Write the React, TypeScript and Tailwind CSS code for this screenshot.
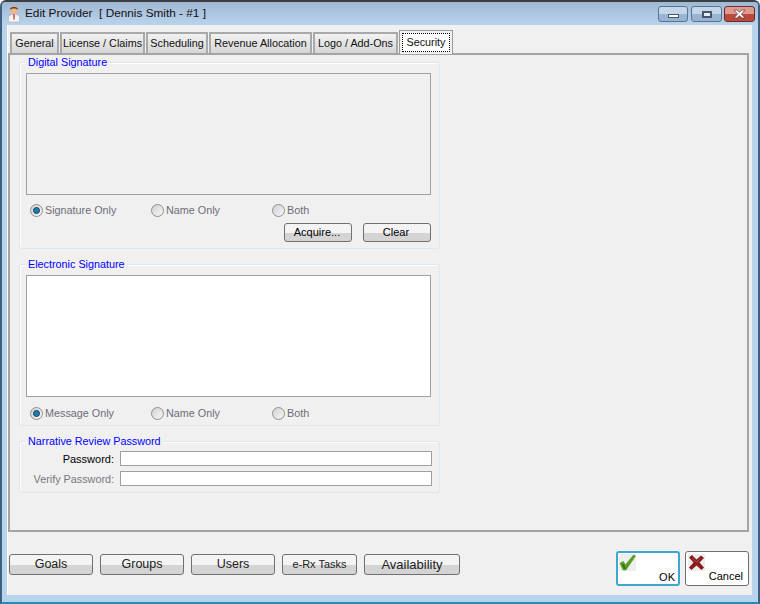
import React from 'react';

const font = "font-['Liberation_Sans',Arial,sans-serif]";

const tabs = [
  { label: 'General', width: 'w-[49px]' },
  { label: 'License / Claims', width: 'w-[85px]' },
  { label: 'Scheduling', width: 'w-[62px]' },
  { label: 'Revenue Allocation', width: 'w-[103px]' },
  { label: 'Logo / Add-Ons', width: 'w-[85px]' },
];

const footerButtons = [
  { label: 'Goals', width: 'w-[84px]', text: 'text-[12.5px]' },
  { label: 'Groups', width: 'w-[84px]', text: 'text-[12.5px]' },
  { label: 'Users', width: 'w-[84px]', text: 'text-[12.5px]' },
  { label: 'e-Rx Tasks', width: 'w-[75px]', text: 'text-[11px]' },
  { label: 'Availability', width: 'w-[96px]', text: 'text-[13px]' },
];

const Radio: React.FC<{ label: string; checked?: boolean; width: string }> = ({ label, checked, width }) => (
  <div className={`flex items-center gap-[2px] ${width}`}>
    <span className="w-[13px] h-[13px] rounded-full border border-[#8f8f8f] bg-gradient-to-br from-[#d0d0d0] to-[#f8f8f8] flex items-center justify-center">
      {checked && <span className="w-[7px] h-[7px] rounded-full bg-[#1b7fb5] border border-[#14405f]" />}
    </span>
    <span className="text-[10.8px] text-[#6d6d78] leading-none whitespace-nowrap">{label}</span>
  </div>
);

const GroupBox: React.FC<{ title: string; height: string; children: React.ReactNode }> = ({ title, height, children }) => (
  <div className={`relative w-[421px] ${height} border border-[#dfe6ec] rounded-[3px] shadow-[inset_1px_1px_0_#fff]`}>
    <span className="absolute left-[6px] top-[-8px] bg-[#f0f0f0] px-[2px] text-[10.8px] leading-[15px] text-[#0000ff] whitespace-nowrap">{title}</span>
    {children}
  </div>
);

const SmallButton: React.FC<{ label: string }> = ({ label }) => (
  <button className="w-[68px] h-[19px] border border-[#707070] rounded-[3px] bg-gradient-to-b from-[#f4f4f4] from-50% to-[#d4d4d4] to-50% pr-[2px] text-[11px] leading-none text-black">
    {label}
  </button>
);

const DoctorIcon = () => (
  <svg width="14" height="18" viewBox="0 0 14 18">
    <ellipse cx="7" cy="5" rx="3.8" ry="4" fill="#e8b98a" />
    <path d="M3 5 C2.8 0.6 11.2 0.6 11 5 C9.5 3 4.5 3 3 5Z" fill="#6f421a" />
    <path d="M1.5 17 L1.5 12 C1.5 10.5 4 9.8 5.5 9.4 L8.5 9.4 C10 9.8 12.5 10.5 12.5 12 L12.5 17Z" fill="#f4f4f4" stroke="#a8a8a8" strokeWidth="0.5" />
    <path d="M6.2 9.6 L7.8 9.6 L7.6 14 L7 15 L6.4 14Z" fill="#c8352c" />
  </svg>
);

const CheckIcon = () => (
  <svg width="17" height="17" viewBox="0 0 17 17" className="bg-[#eeeeee]">
    <path d="M1 9 L4.5 7.5 L6.3 11 L14.5 1 L16.5 2 L7 16 L4 16Z" fill="#5a9e1e" stroke="#4a8a16" strokeWidth="0.5" />
    <path d="M3 10 L5 15 L6.5 15 L5 10Z" fill="#2f7410" />
  </svg>
);

const CrossIcon = () => (
  <svg width="17" height="17" viewBox="0 0 17 17" className="bg-[#eeeeee]">
    <path d="M1 3.5 L4 1 L8.5 5.5 L13 1.5 L16 4 L11.5 8.5 L16 13.5 L13.5 16 L8.5 11.5 L3.5 16 L1 13.5 L5.5 8.5Z" fill="#8a1c1c" />
    <path d="M4 3 L8.5 7.5 L13 3.5 L9.5 8.5 L6 7Z" fill="#a94a4a" />
  </svg>
);

export default function App() {
  return (
    <div className={`${font} w-[760px] h-[604px] overflow-hidden bg-[#b9d3ec] border-x-2 border-t-2 border-b-[2px] border-x-[#3d5f80] border-t-[#3a3f45] border-b-[#1d8fb0] rounded-t-[6px] flex flex-col`}>
      {/* Title bar */}
      <div className="h-[23px] shrink-0 bg-gradient-to-b from-[#a0b8d3] to-[#bad3ec] flex items-center pl-[5px] pr-[3px] relative">
        <DoctorIcon />
        <span className="ml-[4px] text-[11.8px] text-[#111] leading-none whitespace-nowrap">Edit Provider&nbsp; [ Dennis Smith - #1 ]</span>
        <div className="ml-auto flex self-start mt-[4px]">
          <div className="w-[30px] h-[16px] rounded-[3px] border border-[#5c7390] bg-gradient-to-b from-[#c4d6ea] from-50% to-[#97b4d2] to-50% flex items-center justify-center pt-[4px]">
            <span className="w-[11px] h-[4px] bg-white border border-[#48566a]" />
          </div>
          <div className="ml-[3px] w-[31px] h-[16px] rounded-[3px] border border-[#5c7390] bg-gradient-to-b from-[#c4d6ea] from-50% to-[#97b4d2] to-50% flex items-center justify-center">
            <span className="w-[10px] h-[7px] bg-[#e8eef5] border-2 border-[#48566a]" />
          </div>
          <div className="ml-[2px] w-[31px] h-[16px] rounded-[3px] border border-[#6e2c26] bg-gradient-to-b from-[#dc9a90] from-50% to-[#bb4a3c] to-50% flex items-center justify-center">
            <svg width="13" height="10" viewBox="0 0 13 10">
              <path d="M1 1 L4 1 L6.5 3.2 L9 1 L12 1 L8.5 5 L12 9 L9 9 L6.5 6.8 L4 9 L1 9 L4.5 5Z" fill="#fff" stroke="#5a3430" strokeWidth="0.7" />
            </svg>
          </div>
        </div>
      </div>

      {/* Client area */}
      <div className="w-[745px] ml-[5px] h-[570px] bg-[#f0f0f0] border-l border-[#f8fbff] flex flex-col">
        <div className="flex items-end h-[28px] pl-[2px]">
          {tabs.map((tab) => (
            <div
              key={tab.label}
              className={`${tab.width} h-[21px] mr-[1px] border-2 border-b-0 border-[#a9a9a9] bg-gradient-to-b from-[#f2f2f2] to-[#d6d6d6] flex items-center justify-center text-[10.8px] leading-none text-[#111] whitespace-nowrap`}
            >
              {tab.label}
            </div>
          ))}
          <div className="w-[54px] h-[24px] -mb-[1px] relative z-10 border-x border-t border-[#9a9a9a] bg-[#f0f0f0] p-[2px]">
            <div className="h-full border border-dotted border-black bg-white flex items-center justify-center text-[10.8px] leading-none text-[#111]">
              Security
            </div>
          </div>
        </div>

        <div className="w-[741px] h-[479px] border-2 border-[#a4a4a4] pl-[9px] pt-[7px] flex flex-col">
          <GroupBox title="Digital Signature" height="h-[187px]">
            <div className="ml-[6px] mt-[10px] w-[405px] h-[122px] border border-[#a0a0a0]" />
            <div className="flex ml-[10px] mt-[9px] h-[13px]">
              <Radio label="Signature Only" checked width="w-[121px]" />
              <Radio label="Name Only" width="w-[121px]" />
              <Radio label="Both" width="w-[60px]" />
            </div>
            <div className="flex justify-end gap-[11px] mr-[8px] mt-[6px]">
              <SmallButton label="Acquire..." />
              <SmallButton label="Clear" />
            </div>
          </GroupBox>

          <div className="mt-[15px]">
            <GroupBox title="Electronic Signature" height="h-[162px]">
              <div className="ml-[6px] mt-[10px] w-[405px] h-[122px] border border-[#a0a0a0] bg-white" />
              <div className="flex ml-[10px] mt-[10px] h-[13px]">
                <Radio label="Message Only" checked width="w-[121px]" />
                <Radio label="Name Only" width="w-[121px]" />
                <Radio label="Both" width="w-[60px]" />
              </div>
            </GroupBox>
          </div>

          <div className="mt-[15px]">
            <GroupBox title="Narrative Review Password" height="h-[52px]">
              <div className="flex items-center mt-[9px] h-[15px]">
                <span className="w-[94px] pt-[1px] text-right text-[11px] leading-none text-black">Password:</span>
                <div className="ml-[6px] w-[312px] h-[15px] bg-white border border-[#a0a0a0]" />
              </div>
              <div className="flex items-center mt-[5px] h-[15px]">
                <span className="w-[94px] pt-[1px] text-right text-[10.8px] leading-none text-[#77777f]">Verify Password:</span>
                <div className="ml-[6px] w-[312px] h-[15px] bg-white border border-[#a0a0a0]" />
              </div>
            </GroupBox>
          </div>
        </div>

        {/* Footer buttons */}
        <div className="flex mt-[19px] pl-[1px] items-start">
          <div className="flex gap-[7px] mt-[3px]">
            {footerButtons.map((btn) => (
              <button
                key={btn.label}
                className={`${btn.width} ${btn.text} h-[21px] border border-[#707070] rounded-[3px] bg-gradient-to-b from-[#f4f4f4] from-50% to-[#d4d4d4] to-50% leading-none text-[#222]`}
              >
                {btn.label}
              </button>
            ))}
          </div>
          <div className="ml-auto flex gap-[5px] mr-[3px]">
            <div className="w-[64px] h-[35px] rounded-[3px] border-2 border-[#3ea6d2] bg-white relative">
              <span className="absolute left-[1px] top-[1px]"><CheckIcon /></span>
              <span className="absolute right-[3px] bottom-[1px] text-[11px] leading-none text-black">OK</span>
            </div>
            <div className="w-[64px] h-[35px] rounded-[3px] border border-[#707070] bg-white relative">
              <span className="absolute left-[2px] top-[2px]"><CrossIcon /></span>
              <span className="absolute right-[5px] bottom-[3px] text-[11px] leading-none text-black">Cancel</span>
            </div>
          </div>
        </div>
      </div>
    </div>
  );
}
